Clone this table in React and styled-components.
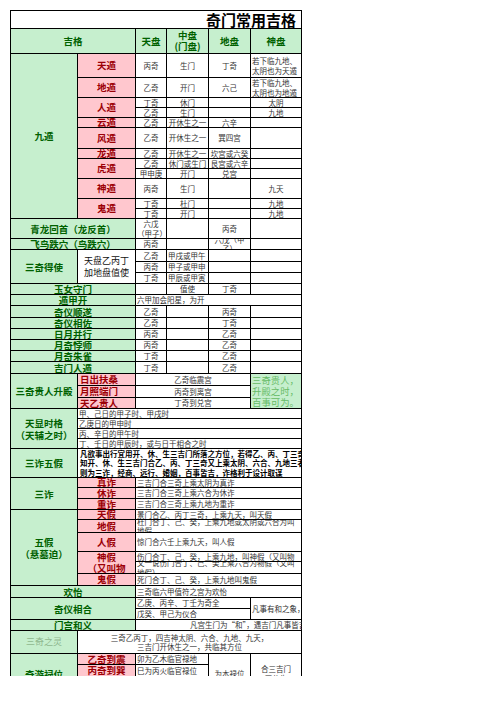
import React from 'react'
import styled, { createGlobalStyle, css } from 'styled-components'

const colors = {
  line: '#000',
  goodBg: '#c6efce',
  goodInk: '#006100',
  badBg: '#ffc7ce',
  badInk: '#9c0006',
  ink: '#333',
  soft: '#66bb66',
  faded: '#8fb88f',
}

const Page = createGlobalStyle`
  html, body {
    margin: 0;
    padding: 0;
    background: #fff;
  }
  body {
    font-family: "Liberation Sans", "Noto Sans CJK SC", sans-serif;
  }
`

// row heights follow the sheet, one px line below each
const rowHeights = [
  17, 24, 23, 19, 9, 9, 9, 20, 9, 9, 9, 19, 9, 9, 19, 10,
  11, 10, 10, 10, 10, 11, 10, 10, 10, 10, 11,
  11, 11, 10, 9, 9, 9, 9, 28,
  9, 10, 10, 9, 12, 18, 9, 11, 11,
  11, 10, 10, 10, 22, 10, 11, 16,
]

const Frame = styled.div`
  margin: 10px 0 0 10px;
  width: 292px;
  height: 666px;
  overflow: hidden;
`

const Sheet = styled.div`
  display: grid;
  grid-template-columns: 66px 57px 30px 41px 41px 50px;
  grid-template-rows: ${rowHeights.map((h) => `${h}px`).join(' ')};
  gap: 1px;
  padding: 1px;
  width: max-content;
  background: ${colors.line};
`

const Cell = styled.div`
  grid-column: span ${(p) => p.$c || 1};
  grid-row: span ${(p) => p.$r || 1};
  display: flex;
  align-items: center;
  justify-content: ${(p) => (p.$align === 'left' ? 'flex-start' : 'center')};
  text-align: ${(p) => (p.$align === 'left' ? 'left' : 'center')};
  padding: 0 1px;
  min-width: 0;
  overflow: hidden;
  background: #fff;
  color: ${colors.ink};
  font-family: "Noto Sans CJK SC", sans-serif;
  font-size: 7.5px;
  line-height: 9.5px;
  ${(p) =>
    p.$spill &&
    css`
      overflow: visible;
      white-space: nowrap;
    `}
  ${(p) =>
    p.$indent &&
    css`
      padding-left: ${p.$indent}px;
    `}
`

const Title = styled(Cell)`
  justify-content: flex-end;
  padding-right: 5px;
  color: #000;
  font-size: 15px;
  font-weight: 700;
  line-height: 17px;
`

const Head = styled(Cell)`
  background: ${colors.goodBg};
  color: ${colors.goodInk};
  font-size: 9.5px;
  font-weight: 700;
  line-height: 11px;
`

const Group = styled(Head)`
  line-height: 12px;
`

const Tag = styled(Cell)`
  background: ${colors.badBg};
  color: ${colors.badInk};
  font-size: 9.5px;
  font-weight: 700;
  line-height: 11px;
  white-space: nowrap;
  ${(p) =>
    p.$align === 'left' &&
    css`
      padding-left: 2px;
    `}
`

const Note = styled(Cell)`
  color: #111;
  font-size: 9px;
  line-height: 12px;
`

const Strong = styled(Cell)`
  color: #000;
  font-weight: 700;
  line-height: 9.6px;
  padding-left: 2px;
`

const Soft = styled(Cell)`
  background: ${colors.goodBg};
  color: ${colors.soft};
  font-size: 9.4px;
  line-height: 11px;
  white-space: nowrap;
`

const Faded = styled(Cell)`
  background: ${colors.goodBg};
  color: ${colors.faded};
  font-size: 9px;
`

const Empty = styled(Cell)``

const pairs = [
  ['奇仪顺遂', '乙奇', '丙奇'],
  ['奇仪相佐', '乙奇', '丁奇'],
  ['日月并行', '丙奇', '乙奇'],
  ['月奇悖师', '丙奇', '乙奇'],
  ['月奇朱雀', '丁奇', '乙奇'],
  ['吉门人遁', '丁奇', '乙奇'],
]

function App() {
  return (
    <>
      <Page />
      <Frame>
        <Sheet>
          <Title $c={6}>奇门常用吉格</Title>

          <Head $c={2}>吉格</Head>
          <Head>天盘</Head>
          <Head>中盘<br />(门盘)</Head>
          <Head>地盘</Head>
          <Head>神盘</Head>

          <Group $r={12}>九遁</Group>
          <Tag>天遁</Tag>
          <Cell>丙奇</Cell>
          <Cell>生门</Cell>
          <Cell>丁奇</Cell>
          <Cell $align="left">若下临九地、太阴也为天遁</Cell>

          <Tag>地遁</Tag>
          <Cell>乙奇</Cell>
          <Cell>开门</Cell>
          <Cell>六己</Cell>
          <Cell $align="left">若下临九地、太阴也为地遁</Cell>

          <Tag $r={2}>人遁</Tag>
          <Cell>丁奇</Cell>
          <Cell>休门</Cell>
          <Empty />
          <Cell>太阴</Cell>
          <Cell>乙奇</Cell>
          <Cell>生门</Cell>
          <Empty />
          <Cell>九地</Cell>

          <Tag>云遁</Tag>
          <Cell>乙奇</Cell>
          <Cell>开休生之一</Cell>
          <Cell>六辛</Cell>
          <Empty />

          <Tag>风遁</Tag>
          <Cell>乙奇</Cell>
          <Cell>开休生之一</Cell>
          <Cell>巽四宫</Cell>
          <Empty />

          <Tag>龙遁</Tag>
          <Cell>乙奇</Cell>
          <Cell>开休生之一</Cell>
          <Cell>坎宫或六癸</Cell>
          <Empty />

          <Tag $r={2}>虎遁</Tag>
          <Cell>乙奇</Cell>
          <Cell>休门或生门</Cell>
          <Cell>艮宫或六辛</Cell>
          <Empty />
          <Cell>甲申庚</Cell>
          <Cell>开门</Cell>
          <Cell>兑宫</Cell>
          <Empty />

          <Tag>神遁</Tag>
          <Cell>丙奇</Cell>
          <Cell>生门</Cell>
          <Empty />
          <Cell>九天</Cell>

          <Tag $r={2}>鬼遁</Tag>
          <Cell>丁奇</Cell>
          <Cell>杜门</Cell>
          <Empty />
          <Cell>九地</Cell>
          <Cell>丁奇</Cell>
          <Cell>开门</Cell>
          <Empty />
          <Cell>九地</Cell>

          <Group $c={2}>青龙回首（龙反首）</Group>
          <Cell>六戊（甲子）</Cell>
          <Empty />
          <Cell>丙奇</Cell>
          <Empty />

          <Group $c={2}>飞鸟跌穴（鸟跌穴）</Group>
          <Cell>丙奇</Cell>
          <Empty />
          <Cell>六戊（甲子）</Cell>
          <Empty />

          <Group $r={3}>三奇得使</Group>
          <Note $r={3}>天盘乙丙丁<br />加地盘值使</Note>
          <Cell>乙奇</Cell>
          <Cell $align="left">甲戌或甲午</Cell>
          <Empty />
          <Empty />
          <Cell>丙奇</Cell>
          <Cell $align="left">甲子或甲申</Cell>
          <Empty />
          <Empty />
          <Cell>丁奇</Cell>
          <Cell $align="left">甲辰或甲寅</Cell>
          <Empty />
          <Empty />

          <Group $c={2}>玉女守门</Group>
          <Empty />
          <Cell>值使</Cell>
          <Cell>丁奇</Cell>
          <Empty />

          <Group $c={2}>遁甲开</Group>
          <Cell $c={4} $align="left">六甲加会阳星，为开</Cell>

          {pairs.map(([name, top, bottom]) => (
            <React.Fragment key={name}>
              <Group $c={2}>{name}</Group>
              <Cell>{top}</Cell>
              <Empty />
              <Cell>{bottom}</Cell>
              <Empty />
            </React.Fragment>
          ))}

          <Group $r={3}>三奇贵人升殿</Group>
          <Tag $align="left">日出扶桑</Tag>
          <Cell $c={3}>乙奇临震宫</Cell>
          <Soft $r={3} $align="left">三奇贵人，<br />升殿之时，<br />百事可为。</Soft>
          <Tag $align="left">月照端门</Tag>
          <Cell $c={3}>丙奇到离宫</Cell>
          <Tag $align="left">天乙贵人</Tag>
          <Cell $c={3}>丁奇到兑宫</Cell>

          <Group $r={4}>天显时格<br />（天辅之时）</Group>
          <Cell $c={5} $align="left">甲、己日的甲子时、甲戌时</Cell>
          <Cell $c={5} $align="left">乙庚日的甲申时</Cell>
          <Cell $c={5} $align="left">丙、辛日的甲午时</Cell>
          <Cell $c={5} $align="left">丁、壬日的甲辰时，或与日干相合之时</Cell>

          <Group>三诈五假</Group>
          <Strong $c={5} $align="left" $spill>
            凡欲事出行宜用开、休、生三吉门所落之方位，若得乙、丙、丁三奇<br />
            知开、休、生三吉门合乙、丙、丁三奇又上乘太阴、六合、九地三者<br />
            则为三诈，经商、远行、婚姻，百事皆吉，诈格利于设计取谋
          </Strong>

          <Group $r={3}>三诈</Group>
          <Tag>真诈</Tag>
          <Cell $c={4} $align="left">三吉门合三奇上乘太阴为真诈</Cell>
          <Tag>休诈</Tag>
          <Cell $c={4} $align="left">三吉门合三奇上乘六合为休诈</Cell>
          <Tag>重诈</Tag>
          <Cell $c={4} $align="left">三吉门合三奇上乘九地为重诈</Cell>

          <Group $r={6}>五假<br />（悬墓迫）</Group>
          <Tag>天假</Tag>
          <Cell $c={4} $align="left">景门合乙、丙丁三奇，上乘九天，叫天假</Cell>
          <Tag>地假</Tag>
          <Cell $c={4} $align="left">杜门合丁、己、癸，上乘九地或太阴或六合为叫地假</Cell>
          <Tag>人假</Tag>
          <Cell $c={4} $align="left">惊门合六壬上乘九天，叫人假</Cell>
          <Tag $r={2}>神假<br />（又叫物</Tag>
          <Cell $c={4} $align="left" $spill>伤门合丁、己、癸，上乘九地，叫神假（又叫物</Cell>
          <Cell $c={4} $align="left">又一说伤门合丁、己、癸上乘六合为物假（又叫地假）</Cell>
          <Tag>鬼假</Tag>
          <Cell $c={4} $align="left">死门合丁、己、癸，上乘九地叫鬼假</Cell>

          <Group $c={2}>欢怡</Group>
          <Cell $c={4} $align="left">三奇临六甲值符之宫为欢怡</Cell>

          <Group $c={2} $r={2}>奇仪相合</Group>
          <Cell $c={3} $align="left">乙庚、丙辛、丁壬为奇全</Cell>
          <Cell $r={2} $align="left" $spill>凡事有和之象，</Cell>
          <Cell $c={3} $align="left">戊癸、甲己为仪合</Cell>

          <Group $c={2}>门宫和义</Group>
          <Cell $c={4} $align="left" $spill $indent={54}>凡宫生门为“和”，遇吉门凡事皆吉</Cell>

          <Faded>三奇之灵</Faded>
          <Cell $c={5}>三奇乙丙丁，四吉神太阴、六合、九地、九天，<br />三吉门开休生之一，共临其方位</Cell>

          <Group $r={3}>奇游禄位</Group>
          <Tag>乙奇到震</Tag>
          <Cell $c={2} $align="left">卯为乙木临官禄地</Cell>
          <Cell $r={3}>为本禄位</Cell>
          <Cell $r={3}>合三吉门<br />开休生</Cell>
          <Tag>丙奇到巽</Tag>
          <Cell $c={2} $align="left">巳为丙火临官禄位</Cell>
          <Tag>丁奇到离</Tag>
          <Cell $c={2} $align="left">午为丁火临官禄位</Cell>
        </Sheet>
      </Frame>
    </>
  )
}

export default App
